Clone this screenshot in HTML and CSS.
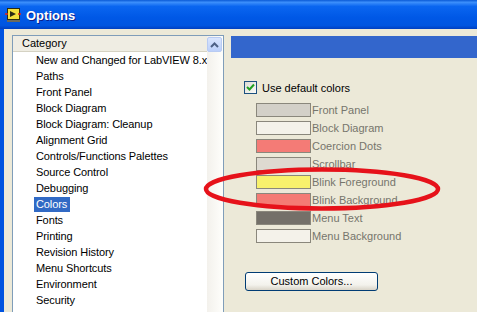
FILE: index.html
```html
<!DOCTYPE HTML>
<html lang="en-US">
<head>
    <title>Options</title>
    <meta charset="UTF-8">
    <link rel="stylesheet" href="styles.css">
</head>
<body>
<div class="window">
    <div class="titlebar">
        <svg class="app-icon" width="16" height="16" viewBox="0 0 16 16">
            <rect x="2.5" y="1.5" width="12" height="11" fill="#f3df3c" stroke="#2b2a14"/>
            <path d="M5 4 L11 7 L5 10 Z" fill="#2b2a14"/>
            <path d="M0 7 H3 M13 7 H16" stroke="#e0241c" stroke-width="1.5"/>
            <rect x="2" y="13" width="13" height="2" fill="#6b6a5c"/>
        </svg>
        <span class="title">Options</span>
    </div>
    <div class="frame">
        <div class="category">
            <div class="list">
                <div class="list-head">Category</div>
                <ul class="items">
                    <li>New and Changed for LabVIEW 8.x</li>
                    <li>Paths</li>
                    <li>Front Panel</li>
                    <li>Block Diagram</li>
                    <li>Block Diagram: Cleanup</li>
                    <li>Alignment Grid</li>
                    <li>Controls/Functions Palettes</li>
                    <li>Source Control</li>
                    <li>Debugging</li>
                    <li><span class="selected">Colors</span></li>
                    <li>Fonts</li>
                    <li>Printing</li>
                    <li>Revision History</li>
                    <li>Menu Shortcuts</li>
                    <li>Environment</li>
                    <li>Security</li>
                    <li>Shared Variable Engine</li>
                </ul>
            </div>
            <div class="scrollbar">
                <div class="scroll-up">
                    <svg width="9" height="6" viewBox="0 0 9 6">
                        <path d="M1 5 L4.5 1.5 L8 5" fill="none" stroke="#4d6185" stroke-width="2"/>
                    </svg>
                </div>
            </div>
        </div>
        <div class="panel">
            <div class="panel-head"></div>
            <div class="check">
                <span class="box">
                    <svg width="11" height="11" viewBox="0 0 11 11">
                        <path d="M2 5 L4.5 7.5 L9 2.5" fill="none" stroke="#21a121" stroke-width="2"/>
                    </svg>
                </span>
                <span>Use default colors</span>
            </div>
            <div class="swatches">
                <div class="swatch-row"><span class="swatch sw-front"></span>Front Panel</div>
                <div class="swatch-row"><span class="swatch sw-block"></span>Block Diagram</div>
                <div class="swatch-row"><span class="swatch sw-coercion"></span>Coercion Dots</div>
                <div class="swatch-row"><span class="swatch sw-scroll"></span>Scrollbar</div>
                <div class="swatch-row"><span class="swatch sw-blink-fg"></span>Blink Foreground</div>
                <div class="swatch-row"><span class="swatch sw-blink-bg"></span>Blink Background</div>
                <div class="swatch-row"><span class="swatch sw-menu-text"></span>Menu Text</div>
                <div class="swatch-row"><span class="swatch sw-menu-bg"></span>Menu Background</div>
            </div>
            <div class="button">Custom Colors...</div>
        </div>
    </div>
    <svg class="circle-mark" width="477" height="312" viewBox="0 0 477 312">
        <ellipse cx="322" cy="189" rx="116" ry="19.5" fill="none" stroke="#e6121a" stroke-width="4.5"/>
    </svg>
</div>
</body>
</html>
```

FILE: styles.css
```css
* {
    box-sizing: border-box;
}

html, body {
    margin: 0;
    padding: 0;
    width: 477px;
    height: 312px;
    overflow: hidden;
    font-family: "Liberation Sans", Arial, sans-serif;
    font-size: 11px;
}

.window {
    position: relative;
    width: 477px;
    height: 312px;
    background: #ece9d8;
}

.titlebar {
    height: 29px;
    display: flex;
    align-items: center;
    gap: 5px;
    padding: 1px 0 0 5px;
    background: linear-gradient(#0a5ad6 0, #3c8ffb 8%, #0a66f0 22%, #0058e6 60%, #0055e0 88%, #003fc0 100%);
}

.app-icon {
    display: block;
}

.title {
    color: #fff;
    font-weight: bold;
    font-size: 13px;
    text-shadow: 1px 1px 0 #0a1e8c;
}

.frame {
    display: flex;
    align-items: flex-start;
    height: 283px;
    padding: 6px 0 0 8px;
    border-left: 4px solid #0053e0;
}

.category {
    display: flex;
    width: 212px;
    height: 300px;
    border: 1px solid #7f9db9;
    background: #fff;
}

.list {
    width: 194px;
    overflow: hidden;
}

.list-head {
    height: 16px;
    line-height: 15px;
    padding-left: 9px;
    background: #efede3;
    border-bottom: 1px solid #d5d2c3;
}

.items {
    list-style: none;
    margin: 0;
    padding: 0;
}

.items li {
    height: 16px;
    line-height: 16px;
    padding-left: 23px;
    white-space: nowrap;
    letter-spacing: -0.1px;
}

.selected {
    display: inline-block;
    height: 15px;
    line-height: 15px;
    margin-left: -2px;
    padding: 0 3px 0 2px;
    background: #316ac5;
    color: #fff;
}

.scrollbar {
    width: 16px;
    background: linear-gradient(90deg, #f3f1ec, #fefefb);
    padding: 1px 1px 0 0;
}

.scroll-up {
    height: 15px;
    display: flex;
    align-items: center;
    justify-content: center;
    border: 1px solid #b8cbf3;
    border-radius: 2px;
    background: linear-gradient(#d9e5fd, #bcd0fa);
}

.scroll-up svg {
    display: block;
}

.panel {
    flex: 1;
    margin: 1px 0 0 7px;
}

.panel-head {
    height: 22px;
    background: #3366cc;
}

.check {
    display: flex;
    align-items: center;
    gap: 5px;
    height: 13px;
    margin: 23px 0 0 13px;
}

.box {
    width: 13px;
    height: 13px;
    display: flex;
    align-items: center;
    justify-content: center;
    border: 1px solid #1c5180;
    background: linear-gradient(135deg, #dcdcd5, #fbfbf8);
}

.box svg {
    display: block;
}

.swatches {
    display: flex;
    flex-direction: column;
    gap: 4px;
    margin: 9px 0 0 25px;
}

.swatch-row {
    display: flex;
    align-items: center;
    height: 14px;
    color: #76756c;
}

.swatch {
    width: 55px;
    height: 14px;
    margin-right: 1px;
    border: 1px solid #8a877c;
}

.sw-front {
    background: #d3d0c8;
}

.sw-block {
    background: #f4f2ea;
}

.sw-coercion {
    background: #f47b76;
}

.sw-scroll {
    background: #dedad1;
}

.sw-blink-fg {
    background: #f8f16c;
}

.sw-blink-bg {
    background: #f47b74;
}

.sw-menu-text {
    background: #747069;
}

.sw-menu-bg {
    background: #f4f2ea;
}

.button {
    width: 133px;
    height: 19px;
    line-height: 17px;
    margin: 29px 0 0 14px;
    text-align: center;
    border: 1px solid #003c74;
    border-radius: 3px;
    background: linear-gradient(#ffffff, #f3f2ec 70%, #d9d4c8);
}

.circle-mark {
    position: absolute;
    left: 0;
    top: 0;
    pointer-events: none;
}
```
